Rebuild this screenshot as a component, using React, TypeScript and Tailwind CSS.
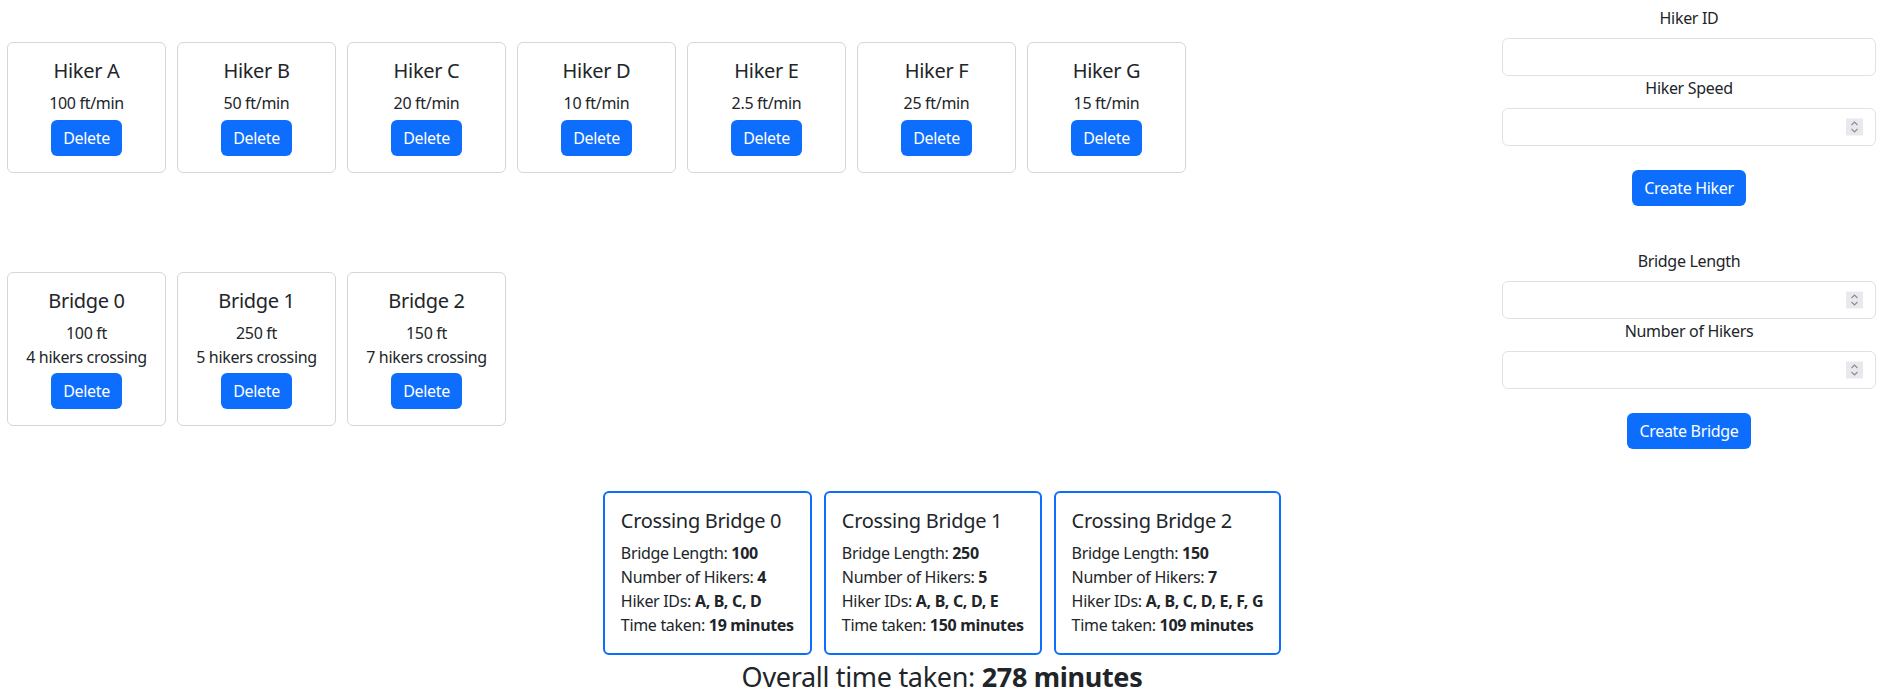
import type { ReactNode } from 'react';

// Hikers crossing bridges — cards on the left, create forms on the right,
// results summary centered below.

type Hiker = { id: string; speed: string };
type Bridge = { id: number; length: number; hikers: number };
type Crossing = { id: number; length: number; count: number; ids: string; time: number };

const hikers: Hiker[] = [
  { id: 'A', speed: '100' },
  { id: 'B', speed: '50' },
  { id: 'C', speed: '20' },
  { id: 'D', speed: '10' },
  { id: 'E', speed: '2.5' },
  { id: 'F', speed: '25' },
  { id: 'G', speed: '15' },
];

const bridges: Bridge[] = [
  { id: 0, length: 100, hikers: 4 },
  { id: 1, length: 250, hikers: 5 },
  { id: 2, length: 150, hikers: 7 },
];

const crossings: Crossing[] = [
  { id: 0, length: 100, count: 4, ids: 'A, B, C, D', time: 19 },
  { id: 1, length: 250, count: 5, ids: 'A, B, C, D, E', time: 150 },
  { id: 2, length: 150, count: 7, ids: 'A, B, C, D, E, F, G', time: 109 },
];

function BlueButton({ children }: { children: ReactNode }) {
  return (
    <button className="rounded-md bg-[#0d6efd] px-3 py-1.5 text-base leading-6 text-white">
      {children}
    </button>
  );
}

function SmallCard({ children }: { children: ReactNode }) {
  return (
    <div className="w-[159px] rounded-md border border-[#d5d6d7] p-4 text-center">
      {children}
    </div>
  );
}

// the browser's number spinner, drawn since it only shows on hover
function Spinner() {
  return (
    <span className="pointer-events-none absolute right-[13px] top-1/2 flex h-[17px] w-[17px] -translate-y-1/2 items-center justify-center bg-[#e9e9ed]">
      <svg width="9" height="13" viewBox="0 0 9 13" fill="none" stroke="#8a8a8f" strokeWidth="1.1">
        <path d="M1.5 4.5 L4.5 1.5 L7.5 4.5" />
        <path d="M1.5 8.5 L4.5 11.5 L7.5 8.5" />
      </svg>
    </span>
  );
}

function Field({ label, number }: { label: string; number?: boolean }) {
  return (
    <div className="flex w-full flex-col items-center">
      <label className="mb-2 leading-6">{label}</label>
      <div className="relative w-full">
        <input
          type={number ? 'number' : 'text'}
          className="h-[38px] w-full rounded-md border border-[#dee2e6] bg-white px-3 py-1.5 outline-none"
        />
        {number && <Spinner />}
      </div>
    </div>
  );
}

export default function App() {
  return (
    <div className="min-h-screen bg-white font-['Noto_Sans',sans-serif] text-base tracking-[-0.02em] text-[#212529]">
      <div className="flex">
        {/* cards */}
        <div className="flex flex-1 flex-col pl-[7px] pt-[42px]">
          <div className="flex gap-[11px]">
            {hikers.map((h) => (
              <SmallCard key={h.id}>
                <h5 className="mb-2 text-xl leading-6">Hiker {h.id}</h5>
                <p className="mb-[5px] leading-6">{h.speed} ft/min</p>
                <BlueButton>Delete</BlueButton>
              </SmallCard>
            ))}
          </div>
          <div className="mt-[99px] flex gap-[11px]">
            {bridges.map((b) => (
              <SmallCard key={b.id}>
                <h5 className="mb-2 text-xl leading-6">Bridge {b.id}</h5>
                <p className="leading-6">{b.length} ft</p>
                <p className="mb-1 leading-6">{b.hikers} hikers crossing</p>
                <BlueButton>Delete</BlueButton>
              </SmallCard>
            ))}
          </div>
        </div>

        {/* forms */}
        <div className="mr-[8px] flex w-[374px] flex-col items-center pt-[6px]">
          <Field label="Hiker ID" />
          <Field label="Hiker Speed" number />
          <div className="mt-6">
            <BlueButton>Create Hiker</BlueButton>
          </div>
          <div className="mt-[43px] w-full">
            <Field label="Bridge Length" number />
            <Field label="Number of Hikers" number />
          </div>
          <div className="mt-6">
            <BlueButton>Create Bridge</BlueButton>
          </div>
        </div>
      </div>

      {/* results */}
      <div className="mt-[42px] flex justify-center gap-3">
        {crossings.map((c) => (
          <div key={c.id} className="rounded-md border-2 border-[#0d6efd] p-4">
            <h5 className="mb-2 text-xl leading-6">Crossing Bridge {c.id}</h5>
            <p className="leading-6">
              Bridge Length: <b>{c.length}</b>
            </p>
            <p className="leading-6">
              Number of Hikers: <b>{c.count}</b>
            </p>
            <p className="leading-6">
              Hiker IDs: <b>{c.ids}</b>
            </p>
            <p className="leading-6">
              Time taken: <b>{c.time} minutes</b>
            </p>
          </div>
        ))}
      </div>
      <h3 className="mt-[6px] text-center text-[27px] leading-[1.2]">
        Overall time taken: <b>278 minutes</b>
      </h3>
    </div>
  );
}
